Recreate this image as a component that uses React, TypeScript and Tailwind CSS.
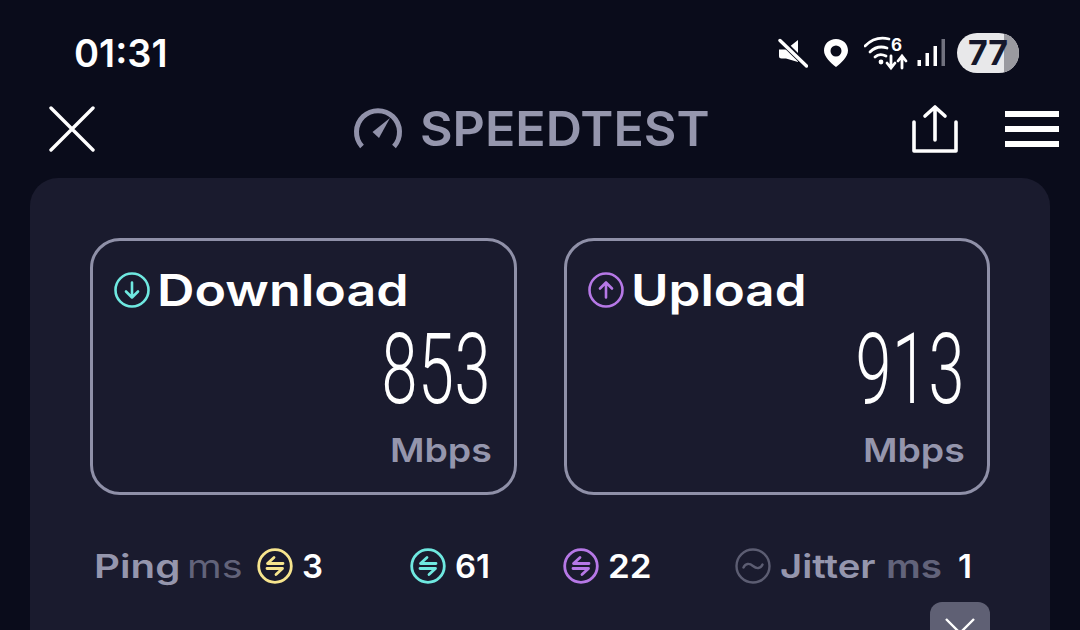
const FONT = "font-['Inter','Noto_Sans',sans-serif]";

function MutedSpeaker() {
  return (
    <svg viewBox="0 0 30 30" className="h-[30px] w-[30px]" aria-hidden="true">
      <path d="M1 11.500h7L20 2v22L8 20.500H3.500Q1 20.500 1 18z" fill="#fff" />
      <path d="M2.500 2 29 28" stroke="#0a0c1b" strokeWidth="6" />
      <path d="M2 2.500 28.500 28" stroke="#fff" strokeWidth="3.400" strokeLinecap="round" />
    </svg>
  );
}

function Pin() {
  return (
    <svg viewBox="0 0 26 30" className="h-[30px] w-[26px]" aria-hidden="true">
      <path
        fillRule="evenodd"
        d="M13 1C6 1 1 6 1 12.500 1 19 8 25 13 29c5-4 12-10 12-16.500C25 6 20 1 13 1zm0 6.500a5.500 5.500 0 1 1 0 11 5.500 5.500 0 0 1 0-11z"
        fill="#fff"
      />
    </svg>
  );
}

function WifiSix() {
  return (
    <svg viewBox="0 0 46 36" className="h-[36px] w-[46px]" aria-hidden="true">
      <g fill="none" stroke="#fff" strokeWidth="2.800" strokeLinecap="round">
        <path d="M1 11C8 4 17 2 25 4" />
        <path d="M6 17c5-5 11-6 17-4" />
        <path d="M11 22c3-3 7-3 11-1" />
        <path d="M27 33v-12M23 28l4 5 4-5" />
        <path d="M38 33V21M34 26l4-5 4 5" />
      </g>
      <circle cx="17" cy="27" r="2.400" fill="#fff" />
      <text x="27" y="16" fill="#fff" fontSize="17" fontWeight="700" fontFamily="Inter, sans-serif">
        6
      </text>
    </svg>
  );
}

function Signal() {
  return (
    <svg viewBox="0 0 28 30" className="h-[30px] w-[28px]" aria-hidden="true">
      <rect x="0.500" y="22" width="3.500" height="6" fill="#fff" />
      <rect x="8.500" y="15" width="3.500" height="13" fill="#fff" />
      <rect x="16.500" y="8" width="3.500" height="20" fill="#fff" />
      <rect x="24.500" y="1" width="3.500" height="27" fill="#71727f" />
    </svg>
  );
}

function Gauge() {
  return (
    <svg viewBox="0 0 50 44" className="h-[44px] w-[50px]" aria-hidden="true">
      <path
        d="M9 39.500A21.500 21.500 0 1 1 41 39.500"
        fill="none"
        stroke="#9192aa"
        strokeWidth="5"
      />
      <path d="M19.500 25 37 11 26 31z" fill="#9192aa" />
    </svg>
  );
}

function Share() {
  return (
    <svg viewBox="0 0 48 50" className="h-[50px] w-[48px]" aria-hidden="true">
      <g fill="none" stroke="#fff" strokeWidth="3.600" strokeLinecap="round" strokeLinejoin="round">
        <path d="M3 18v29h42V18" />
        <path d="M24 36V3M14 12l10-9 10 9" />
      </g>
    </svg>
  );
}

function RoundArrow({ color, up }: { color: string; up?: boolean }) {
  return (
    <svg viewBox="0 0 36 36" className="h-9 w-9 shrink-0" aria-hidden="true">
      <circle cx="18" cy="18" r="16.500" fill="none" stroke={color} strokeWidth="2.600" />
      <path
        d={up ? "M18 25.500v-15M12 16.500l6-6 6 6" : "M18 10.500v15M12 19.500l6 6 6-6"}
        fill="none"
        stroke={color}
        strokeWidth="2.600"
        strokeLinecap="round"
        strokeLinejoin="round"
      />
    </svg>
  );
}

function Swap({ color }: { color: string }) {
  return (
    <svg viewBox="0 0 36 36" className="h-9 w-9 shrink-0" aria-hidden="true">
      <circle cx="18" cy="18" r="16.300" fill="none" stroke={color} strokeWidth="2.800" />
      <path
        d="M26 15.500H10.500l6.500-6M10 20.500h15.500l-6.500 6"
        fill="none"
        stroke={color}
        strokeWidth="2.800"
        strokeLinecap="round"
        strokeLinejoin="round"
      />
    </svg>
  );
}

function Wave() {
  return (
    <svg viewBox="0 0 36 36" className="h-9 w-9 shrink-0" aria-hidden="true">
      <circle cx="18" cy="18" r="16.500" fill="none" stroke="#5c5d72" strokeWidth="2.400" />
      <path
        d="M8.500 19.500c2-4.500 6-4.500 9.500-1.500s7.500 3 9.500-1.500"
        fill="none"
        stroke="#5c5d72"
        strokeWidth="2.400"
        strokeLinecap="round"
      />
    </svg>
  );
}

function ResultBox({
  label,
  labelClass,
  value,
  color,
  up,
}: {
  label: string;
  labelClass: string;
  value: string;
  color: string;
  up?: boolean;
}) {
  return (
    <div className="flex h-[257px] w-[427px] flex-col rounded-[30px] border-[3px] border-[#8f90a8] pt-[27px] pr-[22px] pl-[21px]">
      <div className="flex items-center gap-[7px]">
        <RoundArrow color={color} up={up} />
        <span
          className={`inline-block origin-left text-[44px] leading-[44px] font-semibold whitespace-nowrap text-white ${labelClass}`}
        >
          {label}
        </span>
      </div>
      <div className="mt-[23px] flex h-[70px] justify-end">
        <span className="origin-right scale-x-[0.66] font-['Roboto',sans-serif] text-[98px] leading-[70px] font-[350] tracking-[1px] text-white">
          {value}
        </span>
      </div>
      <div className="mt-[25px] flex h-[40px] justify-end">
        <span className="origin-right scale-x-[1.135] text-[33px] leading-[40px] font-semibold text-[#9596ad]">
          Mbps
        </span>
      </div>
    </div>
  );
}

export default function App() {
  return (
    <div className={`flex h-[630px] w-[1080px] flex-col overflow-hidden bg-[#0a0c1b] ${FONT}`}>
      <div className="flex h-[90px] shrink-0 items-center justify-between pt-[16px] pr-[61px] pl-[74px]">
        <span className="text-[38px] leading-none font-semibold text-white">01:31</span>
        <div className="flex items-center">
          <MutedSpeaker />
          <div className="ml-[15px]">
            <Pin />
          </div>
          <div className="ml-[15px]">
            <WifiSix />
          </div>
          <div className="ml-[7px]">
            <Signal />
          </div>
          <div className="relative ml-[12px] flex h-[40px] w-[62px] items-center justify-center overflow-hidden rounded-full bg-[#e8e8ea]">
            <div className="absolute inset-y-0 right-0 w-[15px] bg-[#9a9aa0]" />
            <span className="relative text-[34px] leading-none font-bold text-[#15172a]">77</span>
          </div>
        </div>
      </div>

      <div className="flex h-[78px] shrink-0 items-center pr-[21px] pl-[49px]">
        <svg viewBox="0 0 46 46" className="h-[46px] w-[46px]" aria-hidden="true">
          <path d="M2 2l42 42M44 2 2 44" stroke="#fff" strokeWidth="3.400" strokeLinecap="round" />
        </svg>
        <div className="ml-[258px] flex items-center gap-[17px]">
          <Gauge />
          <span className="inline-block w-[287px] origin-left scale-x-[1.045] text-[48px] leading-none font-semibold whitespace-nowrap text-[#9596ad]">
            SPEEDTEST
          </span>
        </div>
        <div className="ml-auto flex items-center gap-[46px]">
          <Share />
          <div className="flex w-[54px] flex-col gap-[9px]">
            <div className="h-[6px] bg-white" />
            <div className="h-[6px] bg-white" />
            <div className="h-[6px] bg-white" />
          </div>
        </div>
      </div>

      <div className="mx-[30px] mt-[10px] min-h-0 flex-1 overflow-hidden rounded-t-[28px] bg-[#1a1b2e] px-[60px] pt-[60px]">
        <div className="flex gap-[47px]">
          <ResultBox label="Download" labelClass="scale-x-[1.18]" value="853" color="#6fe8e0" />
          <ResultBox label="Upload" labelClass="scale-x-[1.16]" value="913" color="#b678e6" up />
        </div>

        <div className="mt-[53px] flex h-9 items-center pl-[4px] text-[33px] leading-none font-semibold whitespace-nowrap">
          <span className="inline-block w-[84px] origin-left scale-x-[1.22] text-[#9596ad]">Ping</span>
          <span className="ml-[9px] inline-block w-[54px] origin-left scale-x-[1.2] font-normal text-[#62637a]">
            ms
          </span>
          <div className="ml-[16px]">
            <Swap color="#f7e58e" />
          </div>
          <span className="ml-[9px] inline-block w-[20px] text-white">3</span>
          <div className="ml-[88px]">
            <Swap color="#6fe8e0" />
          </div>
          <span className="ml-[9px] inline-block w-[36px] text-white">61</span>
          <div className="ml-[72px]">
            <Swap color="#b678e6" />
          </div>
          <span className="ml-[9px] inline-block w-[42px] origin-left scale-x-[1.06] text-white">22</span>
          <div className="ml-[85px]">
            <Wave />
          </div>
          <span className="ml-[9px] inline-block w-[95px] origin-left scale-x-[1.16] text-[#9596ad]">
            Jitter
          </span>
          <span className="ml-[11px] inline-block w-[55px] origin-left scale-x-[1.17] text-[#62637a]">
            ms
          </span>
          <span className="ml-[17px] text-white">1</span>
        </div>

        <div className="mt-[18px] flex justify-end">
          <div className="flex h-[60px] w-[60px] items-start justify-center rounded-[12px] bg-[#5f6074] pt-[16px]">
            <svg viewBox="0 0 30 16" className="h-[16px] w-[30px]" aria-hidden="true">
              <path d="M1 1l14 14L29 1" fill="none" stroke="#fff" strokeWidth="2.400" />
            </svg>
          </div>
        </div>
      </div>
    </div>
  );
}
